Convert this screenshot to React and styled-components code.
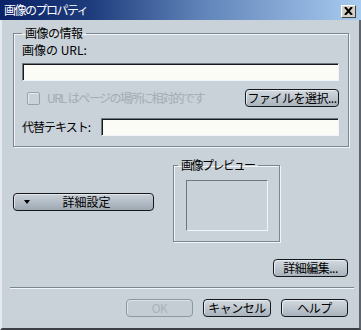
import React from "react";
import styled, { createGlobalStyle } from "styled-components";

const GlobalStyle = createGlobalStyle`
  html, body {
    margin: 0;
    padding: 0;
    background: #c9d1d9;
  }
  body {
    font-family: "Noto Sans CJK JP", "Liberation Sans", sans-serif;
    font-size: 12px;
    color: #000;
  }
`;

export default function App() {
  return (
    <>
      <GlobalStyle />
      <Window>
        <TitleBar>
          <TitleText>画像のプロパティ</TitleText>
          <CloseButton>
            <svg width="9" height="8" viewBox="0 0 9 8">
              <path d="M1 0 L8 8 M8 0 L1 8" stroke="#000" strokeWidth="2" />
            </svg>
          </CloseButton>
        </TitleBar>
        <Body>
          <Group>
            <Legend>画像の情報</Legend>
            <Label>画像の URL:</Label>
            <TextInput $mt={6} />
            <Row $mt={8}>
              <CheckLabel>
                <CheckBox />
                <span>URL&nbsp; はページの場所に相対的です</span>
              </CheckLabel>
              <Button $w={94}>ファイルを選択...</Button>
            </Row>
            <Row $mt={11}>
              <Label $tight>代替テキスト:</Label>
              <TextInput $w={238} />
            </Row>
          </Group>
          <Middle>
            <AdvancedButton>
              <Arrow />
              <ButtonText>詳細設定</ButtonText>
            </AdvancedButton>
            <PreviewGroup>
              <PreviewLegend>画像プレビュー</PreviewLegend>
              <PreviewBox />
            </PreviewGroup>
          </Middle>
          <RightRow $mt={17}>
            <Button $w={75}>詳細編集...</Button>
          </RightRow>
          <Separator />
          <RightRow $mt={10} $gap={10}>
            <Button $w={67} disabled>
              OK
            </Button>
            <Button $w={68}>キャンセル</Button>
            <Button $w={67}>ヘルプ</Button>
          </RightRow>
        </Body>
      </Window>
    </>
  );
}

const Window = styled.div`
  width: 361px;
  height: 330px;
  box-sizing: border-box;
  background: #c9d1d9;
  border-left: 2px solid #e6eaee;
  border-right: 2px solid #5e646c;
  border-bottom: 2px solid #3c4046;
  display: flex;
  flex-direction: column;
`;

const TitleBar = styled.div`
  height: 20px;
  margin: 0 -2px 0 -2px;
  padding: 0 5px 0 4px;
  display: flex;
  align-items: center;
  justify-content: space-between;
  background: linear-gradient(90deg, #0a2268 0%, #1e3c7c 25%, #5f82b8 55%, #a8cbf0 100%);
`;

const TitleText = styled.span`
  color: #fff;
  font-size: 12px;
  line-height: 14px;
  letter-spacing: -1.5px;
`;

const CloseButton = styled.div`
  width: 15px;
  height: 13px;
  box-sizing: border-box;
  margin-top: 2px;
  background: #d4d0c8;
  border: 1px solid;
  border-color: #fff #404040 #404040 #fff;
  display: flex;
  align-items: center;
  justify-content: center;
`;

const Body = styled.div`
  flex: 1;
  display: flex;
  flex-direction: column;
  padding: 6px 10px 0 11px;
`;

const Group = styled.fieldset`
  margin: 0;
  padding: 3px 9px 10px 8px;
  border: 1px solid #7c868f;
  box-shadow: inset 1px 1px 0 #f2f5f8, 1px 1px 0 #f2f5f8;
  display: flex;
  flex-direction: column;
  min-width: 0;
`;

const Legend = styled.legend`
  padding: 0 3px;
  margin-left: 0;
  font-size: 12px;
  line-height: 14px;
  letter-spacing: -0.5px;
`;

const Label = styled.div`
  font-size: 12px;
  line-height: 14px;
  white-space: nowrap;
  letter-spacing: ${(p) => (p.$tight ? "-1px" : "0")};
`;

const TextInput = styled.div`
  height: 18px;
  box-sizing: border-box;
  margin-top: ${(p) => p.$mt || 0}px;
  width: ${(p) => (p.$w ? `${p.$w}px` : "auto")};
  background: #fcfcf7;
  border: 1px solid;
  border-color: #6e7780 #f2f5f8 #f2f5f8 #6e7780;
  box-shadow: inset 1px 1px 0 #15181c;
`;

const Row = styled.div`
  margin-top: ${(p) => p.$mt || 0}px;
  display: flex;
  align-items: center;
  justify-content: space-between;
`;

const CheckLabel = styled.div`
  display: flex;
  align-items: center;
  gap: 7px;
  padding-left: 5px;
  color: #a3abb3;
  font-size: 12px;
  line-height: 14px;
  letter-spacing: -1.5px;
  white-space: nowrap;
`;

const CheckBox = styled.span`
  width: 13px;
  height: 13px;
  box-sizing: border-box;
  border: 1px solid #98a2ac;
  border-radius: 2px;
  box-shadow: inset 1px 1px 0 #e6eaee;
  background: #c9d1d9;
`;

const Button = styled.button`
  width: ${(p) => p.$w}px;
  height: 18px;
  padding: 0;
  box-sizing: border-box;
  font-family: "Noto Sans CJK JP", "Liberation Sans", sans-serif;
  font-size: 12px;
  line-height: 14px;
  letter-spacing: -0.5px;
  color: #000;
  white-space: nowrap;
  border: 1px solid #15191d;
  border-radius: 4px;
  background: linear-gradient(#d3d9df, #a9b3bd);
  box-shadow: inset 1px 1px 0 #e8ecf0;

  &:disabled {
    color: #aab2ba;
    border-color: #8e98a2;
    background: #c4ccd4;
    box-shadow: inset 1px 1px 0 #dde2e7;
  }
`;

const Middle = styled.div`
  display: flex;
  align-items: flex-start;
`;

const AdvancedButton = styled.button`
  width: 141px;
  height: 18px;
  margin-top: 46px;
  padding: 0 0 0 10px;
  box-sizing: border-box;
  display: flex;
  align-items: center;
  font-family: "Noto Sans CJK JP", "Liberation Sans", sans-serif;
  font-size: 12px;
  color: #000;
  border: 1px solid #15191d;
  border-radius: 4px;
  background: linear-gradient(#c9d0d7, #9ea9b4);
  box-shadow: inset 1px 1px 0 #e2e7ec;
`;

const Arrow = styled.span`
  width: 0;
  height: 0;
  border-left: 3px solid transparent;
  border-right: 3px solid transparent;
  border-top: 4px solid #000;
`;

const ButtonText = styled.span`
  flex: 1;
  text-align: center;
  padding-right: 10px;
  line-height: 14px;
`;

const PreviewGroup = styled.fieldset`
  margin: 11px 0 0 19px;
  width: 107px;
  height: 84px;
  box-sizing: border-box;
  padding: 8px 0 0 12px;
  border: 1px solid #7c868f;
  box-shadow: inset 1px 1px 0 #f2f5f8, 1px 1px 0 #f2f5f8;
  min-width: 0;
`;

const PreviewLegend = styled.legend`
  padding: 0 3px;
  margin-left: -8px;
  font-size: 12px;
  line-height: 14px;
  letter-spacing: -1.5px;
`;

const PreviewBox = styled.div`
  width: 82px;
  height: 51px;
  box-sizing: border-box;
  border: 1px solid;
  border-color: #6e7780 #f2f5f8 #f2f5f8 #6e7780;
`;

const RightRow = styled.div`
  margin-top: ${(p) => p.$mt || 0}px;
  display: flex;
  justify-content: flex-end;
  gap: ${(p) => p.$gap || 0}px;
  padding-right: 1px;
`;

const Separator = styled.div`
  margin: 10px -5px 0 -3px;
  height: 1px;
  background: #7c868f;
  border-bottom: 1px solid #f2f5f8;
`;
